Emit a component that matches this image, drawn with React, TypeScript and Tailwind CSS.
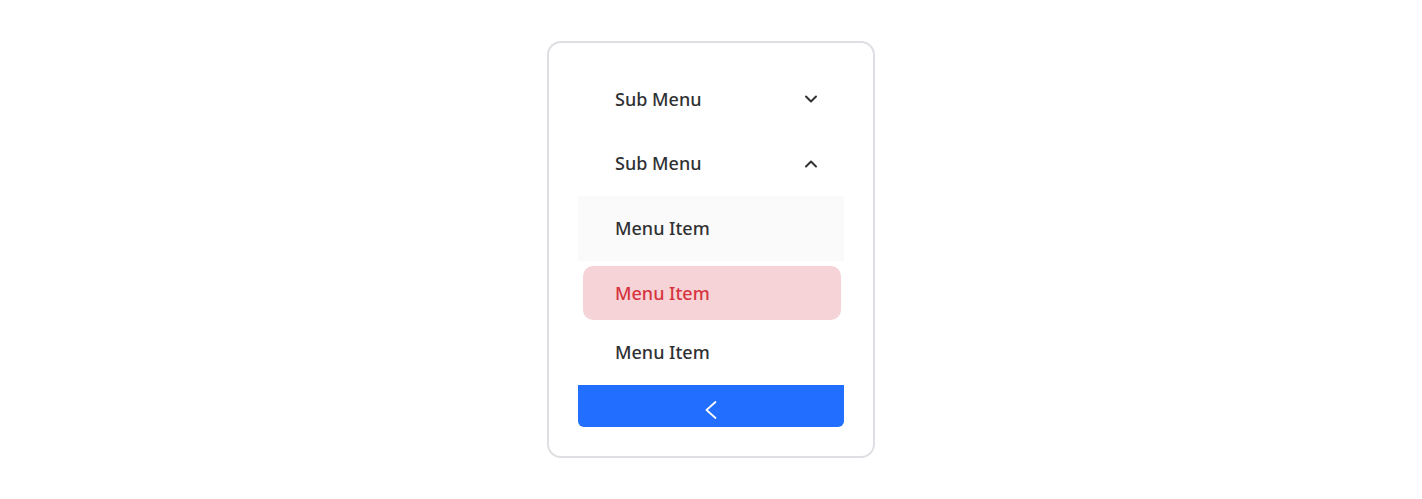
import { ChevronDown, ChevronUp } from "lucide-react";

const font = { fontFamily: '"Segoe UI", "Noto Sans", "Open Sans", sans-serif' };

export default function App() {
  return (
    <div className="w-full h-[499px] bg-white flex items-center justify-center" style={font}>
      <div className="w-[328px] h-[417px] border-2 border-[#dedfe3] rounded-[14px] px-[29px] pt-[24px] pb-[29px] flex flex-col">
        <div className="h-16 flex items-center justify-between pl-[37px] pr-[23px] text-[18px] font-medium text-[#303133]">
          <span>Sub Menu</span>
          <ChevronDown size={20} strokeWidth={2.4} className="text-[#303133]" />
        </div>
        <div className="h-[65px] flex items-center justify-between pl-[37px] pr-[23px] text-[18px] font-medium text-[#303133]">
          <span>Sub Menu</span>
          <ChevronUp size={20} strokeWidth={2.4} className="text-[#303133]" />
        </div>
        <div className="h-[65px] flex items-center pl-[37px] bg-[#fafafa] text-[18px] font-medium text-[#303133]">
          Menu Item
        </div>
        <div className="ml-[5px] mr-[3px] mt-[5px] h-[54px] flex items-center pl-[32px] rounded-[10px] bg-[#f5d3d6] text-[18px] font-medium text-[#d7343f]">
          Menu Item
        </div>
        <div className="h-[65px] flex items-center pl-[37px] text-[18px] font-medium text-[#303133]">
          Menu Item
        </div>
        <div className="h-[42px] flex items-center justify-center pt-2 bg-[#226efe] rounded-b-[6px]">
          <svg width="12" height="18" viewBox="0 0 12 18" fill="none" stroke="white" strokeWidth="1.7" strokeLinecap="round" strokeLinejoin="round">
            <polyline points="10.5,1 1.5,9 10.5,17" />
          </svg>
        </div>
      </div>
    </div>
  );
}
